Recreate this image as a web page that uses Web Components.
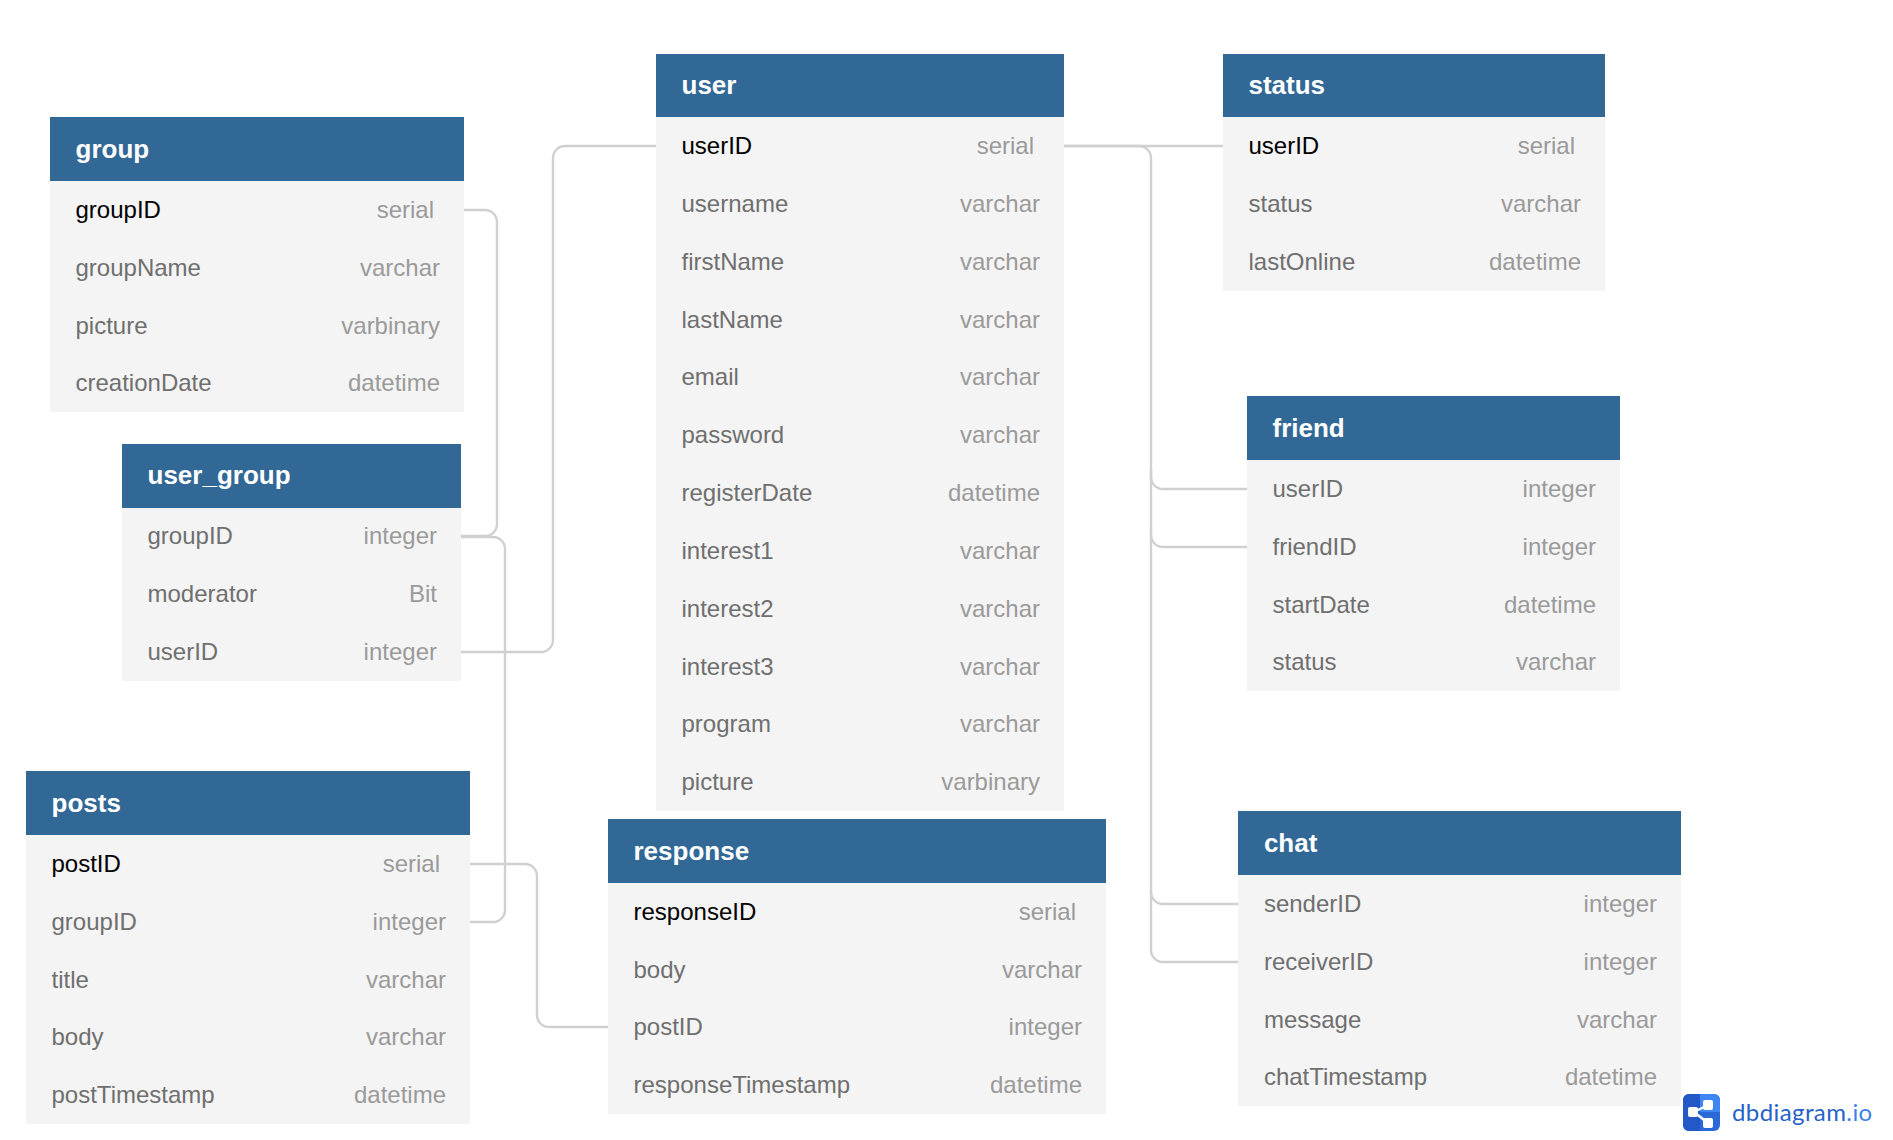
<!DOCTYPE html>
<html>
<head>
<meta charset="utf-8">
<title>dbdiagram</title>
<style>
  html, body { margin: 0; background: #fff; }
</style>
</head>
<body>
<db-canvas>
  <db-table name="group" style="--x:50px;--y:117.4px;--w:414px">
    <db-field name="groupID" type="serial" pk></db-field>
    <db-field name="groupName" type="varchar"></db-field>
    <db-field name="picture" type="varbinary"></db-field>
    <db-field name="creationDate" type="datetime"></db-field>
  </db-table>
  <db-table name="user_group" style="--x:122px;--y:444px;--w:339px">
    <db-field name="groupID" type="integer"></db-field>
    <db-field name="moderator" type="Bit"></db-field>
    <db-field name="userID" type="integer"></db-field>
  </db-table>
  <db-table name="posts" style="--x:26px;--y:771.4px;--w:444px">
    <db-field name="postID" type="serial" pk></db-field>
    <db-field name="groupID" type="integer"></db-field>
    <db-field name="title" type="varchar"></db-field>
    <db-field name="body" type="varchar"></db-field>
    <db-field name="postTimestamp" type="datetime"></db-field>
  </db-table>
  <db-table name="user" style="--x:656px;--y:53.6px;--w:408px">
    <db-field name="userID" type="serial" pk></db-field>
    <db-field name="username" type="varchar"></db-field>
    <db-field name="firstName" type="varchar"></db-field>
    <db-field name="lastName" type="varchar"></db-field>
    <db-field name="email" type="varchar"></db-field>
    <db-field name="password" type="varchar"></db-field>
    <db-field name="registerDate" type="datetime"></db-field>
    <db-field name="interest1" type="varchar"></db-field>
    <db-field name="interest2" type="varchar"></db-field>
    <db-field name="interest3" type="varchar"></db-field>
    <db-field name="program" type="varchar"></db-field>
    <db-field name="picture" type="varbinary"></db-field>
  </db-table>
  <db-table name="response" style="--x:608px;--y:819.3px;--w:498px">
    <db-field name="responseID" type="serial" pk></db-field>
    <db-field name="body" type="varchar"></db-field>
    <db-field name="postID" type="integer"></db-field>
    <db-field name="responseTimestamp" type="datetime"></db-field>
  </db-table>
  <db-table name="status" style="--x:1223px;--y:53.6px;--w:382px">
    <db-field name="userID" type="serial" pk></db-field>
    <db-field name="status" type="varchar"></db-field>
    <db-field name="lastOnline" type="datetime"></db-field>
  </db-table>
  <db-table name="friend" style="--x:1247px;--y:396.4px;--w:373px">
    <db-field name="userID" type="integer"></db-field>
    <db-field name="friendID" type="integer"></db-field>
    <db-field name="startDate" type="datetime"></db-field>
    <db-field name="status" type="varchar"></db-field>
  </db-table>
  <db-table name="chat" style="--x:1238.4px;--y:811.4px;--w:442.6px">
    <db-field name="senderID" type="integer"></db-field>
    <db-field name="receiverID" type="integer"></db-field>
    <db-field name="message" type="varchar"></db-field>
    <db-field name="chatTimestamp" type="datetime"></db-field>
  </db-table>
  <db-logo></db-logo>
</db-canvas>
<script>
class DbCanvas extends HTMLElement {
  // ref lines, drawn under the tables
  links = [
    'M464 210 H485 a12 12 0 0 1 12 12 V524 a12 12 0 0 1 -12 12 H461',
    'M461 652 H541 a12 12 0 0 0 12 -12 V158 a12 12 0 0 1 12 -12 H656',
    'M461 537 H493 a12 12 0 0 1 12 12 V910 a12 12 0 0 1 -12 12 H470',
    'M470 864 H525 a12 12 0 0 1 12 12 V1015 a12 12 0 0 0 12 12 H608',
    'M1064 146 H1223',
    'M1064 146 H1139 a12 12 0 0 1 12 12 V477 a12 12 0 0 0 12 12 H1247',
    'M1151 470 V535 a12 12 0 0 0 12 12 H1247',
    'M1151 530 V892 a12 12 0 0 0 12 12 H1238',
    'M1151 890 V950 a12 12 0 0 0 12 12 H1238'
  ];

  constructor() {
    super();
    const shadowRoot = this.attachShadow({ mode: 'open' });
    const paths = this.links.map((d) => `<path d="${d}"/>`).join('');
    shadowRoot.innerHTML = `
      <style>
        :host { display: block; position: relative; width: 1893px; height: 1140px; overflow: hidden; background: #fff; }
        svg { position: absolute; left: 0; top: 0; }
        path { fill: none; stroke: #d0d0d0; stroke-width: 2.4; }
      </style>
      <svg width="1893" height="1140">${paths}</svg>
      <slot></slot>
    `;
  }
}

class DbTable extends HTMLElement {
  constructor() {
    super();
    const shadowRoot = this.attachShadow({ mode: 'open' });
    shadowRoot.innerHTML = `
      <style>
        :host { display: block; position: absolute; left: var(--x); top: var(--y); width: var(--w); background: #f4f4f4; font-family: "Liberation Sans", Arial, sans-serif; }
        header { height: 63.5px; display: flex; align-items: center; padding-left: 25.5px; background: #316896; color: #fff; font-size: 26px; font-weight: bold; }
      </style>
      <header>${this.getAttribute('name')}</header>
      <slot></slot>
    `;
  }
}

class DbField extends HTMLElement {
  constructor() {
    super();
    const shadowRoot = this.attachShadow({ mode: 'open' });
    shadowRoot.innerHTML = `
      <style>
        :host { display: flex; justify-content: space-between; align-items: center; height: 57.85px; padding: 0 24px 0 25.5px; font-size: 24px; color: #6f6f6f; }
        :host([pk]) { padding-right: 30px; color: #000; }
        .type { color: #9a9a9a; }
      </style>
      <span>${this.getAttribute('name')}</span>
      <span class="type">${this.getAttribute('type')}</span>
    `;
  }
}

class DbLogo extends HTMLElement {
  constructor() {
    super();
    const shadowRoot = this.attachShadow({ mode: 'open' });
    shadowRoot.innerHTML = `
      <style>
        :host { display: flex; align-items: center; gap: 12px; position: absolute; left: 1683px; top: 1094px; font-family: Lato, sans-serif; font-size: 24px; color: #2563c9; letter-spacing: 0.4px; }
        svg { display: block; }
        div { margin-top: -3px; }
        span { color: #3f82e6; }
      </style>
      <svg width="37" height="37" viewBox="0 0 37 37">
        <defs><clipPath id="r"><rect width="37" height="37" rx="6"/></clipPath></defs>
        <g clip-path="url(#r)">
          <rect width="37" height="37" fill="#2a6ad6"/>
          <rect width="17" height="37" fill="#2259c6"/>
          <rect x="17" width="20" height="18" fill="#3f86f5"/>
        </g>
        <path d="M11 18 25 11 M11 18 25 29" stroke="#fff" stroke-width="2.5" fill="none"/>
        <rect x="5" y="13" width="10" height="10" rx="2" fill="#fff"/>
        <rect x="20" y="6" width="10" height="10" rx="2" fill="#fff"/>
        <rect x="20" y="24" width="10" height="10" rx="2" fill="#fff"/>
      </svg>
      <div>dbdiagram<span>.io</span></div>
    `;
  }
}

customElements.define('db-canvas', DbCanvas);
customElements.define('db-table', DbTable);
customElements.define('db-field', DbField);
customElements.define('db-logo', DbLogo);
</script>
</body>
</html>
